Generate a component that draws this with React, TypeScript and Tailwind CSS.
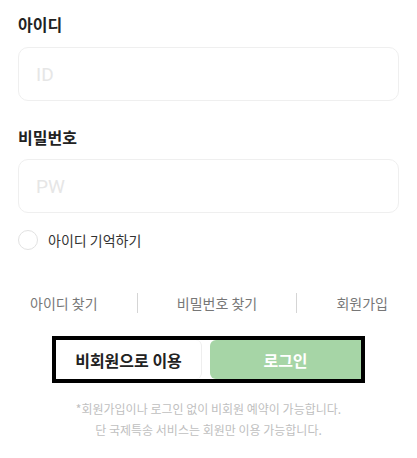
export default function App() {
  return (
    <div className="bg-white w-[417px] h-[458px] px-[18px] pt-[12px] font-['Noto_Sans_CJK_KR','Noto_Sans',sans-serif]">
      {/* ID */}
      <label className="block text-[16px] leading-[24px] font-bold text-[#222] mb-[11px]">아이디</label>
      <input
        type="text"
        placeholder="ID"
        className="block w-full h-[54px] rounded-[10px] border border-[#efefef] pl-[17px] text-[19px] font-['Roboto',sans-serif] outline-none placeholder:text-[#e6e6e6]"
      />

      {/* PW */}
      <label className="block mt-[24px] text-[16px] leading-[24px] font-bold text-[#222] mb-[10px]">비밀번호</label>
      <input
        type="password"
        placeholder="PW"
        className="block w-full h-[54px] rounded-[10px] border border-[#efefef] pl-[17px] text-[19px] font-['Roboto',sans-serif] outline-none placeholder:text-[#e6e6e6]"
      />

      {/* Remember */}
      <div className="flex items-center gap-[10px] mt-[17px] h-[20px]">
        <span className="w-[20px] h-[20px] rounded-full border border-[#e2e2e2] bg-white" />
        <span className="text-[14px] leading-[20px] text-[#333]">아이디 기억하기</span>
      </div>

      {/* Links */}
      <div className="flex items-center justify-between mt-[43px] pl-[12px] pr-[11px] h-[20px] text-[14px] text-[#777]">
        <span>아이디 찾기</span>
        <span className="w-px h-[20px] bg-[#d5d5d5]" />
        <span>비밀번호 찾기</span>
        <span className="w-px h-[20px] bg-[#d5d5d5]" />
        <span>회원가입</span>
      </div>

      {/* Buttons */}
      <div className="flex justify-center mt-[23px]">
        <div className="flex w-[313px] h-[47px] border-[4px] border-black gap-[8px]">
          <button className="w-[146px] h-full bg-white rounded-r-[6px] border-r border-[#eee] text-[16px] font-bold text-[#222]">
            비회원으로 이용
          </button>
          <button className="flex-1 h-full bg-[#a6d5a6] rounded-l-[6px] text-[16px] font-bold text-white">
            로그인
          </button>
        </div>
      </div>

      {/* Notice */}
      <div className="mt-[15px] text-center text-[12px] leading-[21px] text-[#c0c0c0]">
        <p>*회원가입이나 로그인 없이 비회원 예약이 가능합니다.</p>
        <p>단 국제특송 서비스는 회원만 이용 가능합니다.</p>
      </div>
    </div>
  );
}
